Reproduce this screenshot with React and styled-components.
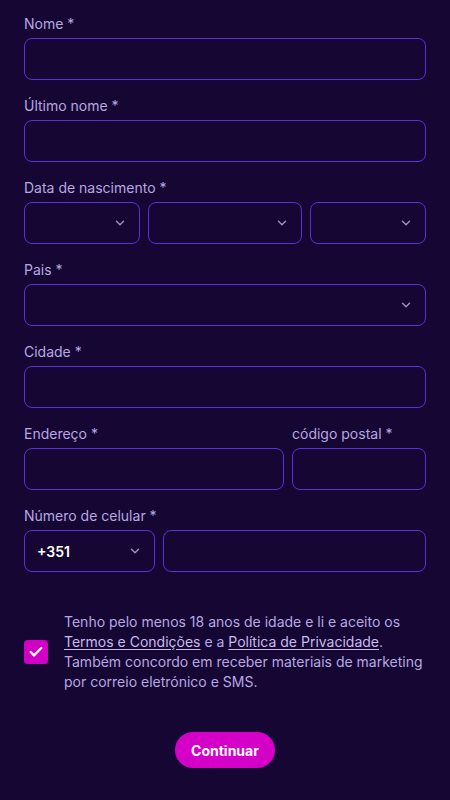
import React from "react";
import styled, { createGlobalStyle } from "styled-components";
import { ChevronDown, Check } from "lucide-react";

const GlobalStyle = createGlobalStyle`
  html, body {
    margin: 0;
    padding: 0;
    background: #160634;
  }
  * {
    box-sizing: border-box;
  }
`;

const Page = styled.div`
  width: 450px;
  min-height: 800px;
  background: #160634;
  padding: 14px 24px 32px;
  font-family: Inter, "Noto Sans", sans-serif;
  display: flex;
  flex-direction: column;
`;

const Form = styled.form`
  display: flex;
  flex-direction: column;
  gap: 16px;
`;

const Field = styled.div`
  display: flex;
  flex-direction: column;
  gap: 4px;
  min-width: 0;
`;

const Label = styled.label`
  font-size: 14px;
  line-height: 20px;
  color: #b6a8e0;
`;

const Input = styled.input`
  height: 42px;
  width: 100%;
  border: 1px solid #5a2fdc;
  border-radius: 8px;
  background: transparent;
  color: #ffffff;
  font-family: inherit;
  font-size: 14px;
  padding: 0 14px;
  outline: none;
`;

const Select = styled.button`
  height: 42px;
  width: 100%;
  border: 1px solid #5a2fdc;
  border-radius: 8px;
  background: transparent;
  color: #ffffff;
  font-family: inherit;
  font-size: 14px;
  font-weight: 600;
  padding: 0 12px 0 12px;
  display: flex;
  align-items: center;
  justify-content: space-between;
  cursor: pointer;

  svg {
    color: #9a92b4;
    flex-shrink: 0;
  }
`;

const Row = styled.div`
  display: grid;
  grid-template-columns: ${(p) => p.$cols};
  gap: 8px;
`;

const Consent = styled.div`
  display: flex;
  align-items: center;
  gap: 16px;
  margin-top: 24px;
`;

const Checkbox = styled.span`
  width: 24px;
  height: 24px;
  flex-shrink: 0;
  border-radius: 4px;
  background: #d200c6;
  display: flex;
  align-items: center;
  justify-content: center;
  color: #ffffff;
`;

const ConsentText = styled.p`
  margin: 0;
  font-size: 14px;
  line-height: 20px;
  color: #b6a8e0;
`;

const Link = styled.a`
  color: #c8bcec;
  text-decoration: underline;
  text-underline-offset: 2px;
`;

const SubmitButton = styled.button`
  align-self: center;
  margin-top: 24px;
  width: 100px;
  height: 36px;
  border: none;
  border-radius: 18px;
  background: #d400c8;
  color: #ffffff;
  font-family: inherit;
  font-size: 14px;
  font-weight: 700;
  cursor: pointer;
`;

const SelectBox = ({ value }) => (
  <Select type="button">
    <span>{value}</span>
    <ChevronDown size={14} strokeWidth={2.5} />
  </Select>
);

const App = () => (
  <>
    <GlobalStyle />
    <Page>
      <Form onSubmit={(e) => e.preventDefault()}>
        <Field>
          <Label>Nome *</Label>
          <Input />
        </Field>
        <Field>
          <Label>Último nome *</Label>
          <Input />
        </Field>
        <Field>
          <Label>Data de nascimento *</Label>
          <Row $cols="3fr 4fr 3fr">
            <SelectBox />
            <SelectBox />
            <SelectBox />
          </Row>
        </Field>
        <Field>
          <Label>Pais *</Label>
          <SelectBox />
        </Field>
        <Field>
          <Label>Cidade *</Label>
          <Input />
        </Field>
        <Row $cols="1fr 134px">
          <Field>
            <Label>Endereço *</Label>
            <Input />
          </Field>
          <Field>
            <Label>código postal *</Label>
            <Input />
          </Field>
        </Row>
        <Field>
          <Label>Número de celular *</Label>
          <Row $cols="1fr 2fr">
            <SelectBox value="+351" />
            <Input />
          </Row>
        </Field>
        <Consent>
          <Checkbox>
            <Check size={16} strokeWidth={3.5} />
          </Checkbox>
          <ConsentText>
            Tenho pelo menos 18 anos de idade e li e aceito os{" "}
            <Link href="#">Termos e Condições</Link> e a{" "}
            <Link href="#">Política de Privacidade</Link>. Também concordo em
            receber materiais de marketing por correio eletrónico e SMS.
          </ConsentText>
        </Consent>
        <SubmitButton type="submit">Continuar</SubmitButton>
      </Form>
    </Page>
  </>
);

export default App;
